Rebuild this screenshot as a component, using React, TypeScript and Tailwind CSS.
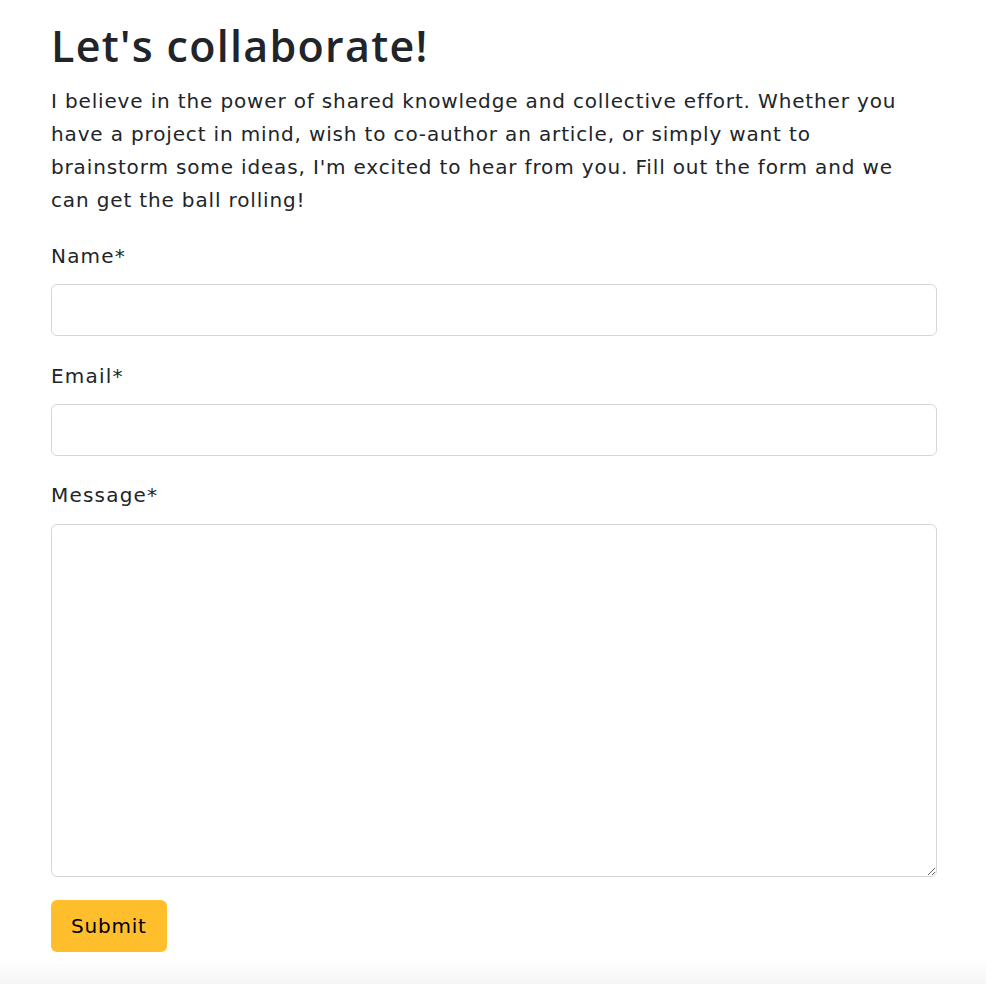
export default function App() {
  return (
    <div className="min-h-[984px] flex flex-col bg-white text-[#212529] font-['DejaVu_Sans',sans-serif]">
      <main className="h-[958px] px-[51px] pt-[20px]">
        <h1 className="font-['Open_Sans',sans-serif] text-[43px] leading-[52px] font-semibold tracking-[1.3px]">Let's collaborate!</h1>
        <p className="mt-[13px] text-[20px] leading-[33px] tracking-[0.85px] max-w-[886px]">
          I believe in the power of shared knowledge and collective effort. Whether you<br />
          have a project in mind, wish to co-author an article, or simply want to<br />
          brainstorm some ideas, I'm excited to hear from you. Fill out the form and we<br />
          can get the ball rolling!
        </p>
        <form className="mt-[24px] w-[886px]" onSubmit={(e) => e.preventDefault()}>
          <label className="block text-[20px] leading-[30px] tracking-[1.2px]" htmlFor="name">Name*</label>
          <input id="name" className="block w-full mt-[13px] h-[52px] border border-[#d3d7db] rounded-[6px] px-3 focus:outline-none" />
          <label className="block mt-[25px] text-[20px] leading-[30px] tracking-[1.2px]" htmlFor="email">Email*</label>
          <input id="email" type="email" className="block w-full mt-[13px] h-[52px] border border-[#d3d7db] rounded-[6px] px-3 focus:outline-none" />
          <label className="block mt-[24px] text-[20px] leading-[30px] tracking-[1.2px]" htmlFor="message">Message*</label>
          <textarea id="message" className="block w-full mt-[14px] h-[353px] border border-[#d3d7db] rounded-[6px] px-3 py-2 focus:outline-none" />
          <button type="submit" className="mt-[23px] h-[52px] px-[20px] bg-[#ffbf2d] rounded-[6px] text-[20px] tracking-[0.8px] text-black">Submit</button>
        </form>
      </main>
      <div className="h-[26px] bg-gradient-to-b from-white to-[#f6f6f6]"></div>
    </div>
  );
}
